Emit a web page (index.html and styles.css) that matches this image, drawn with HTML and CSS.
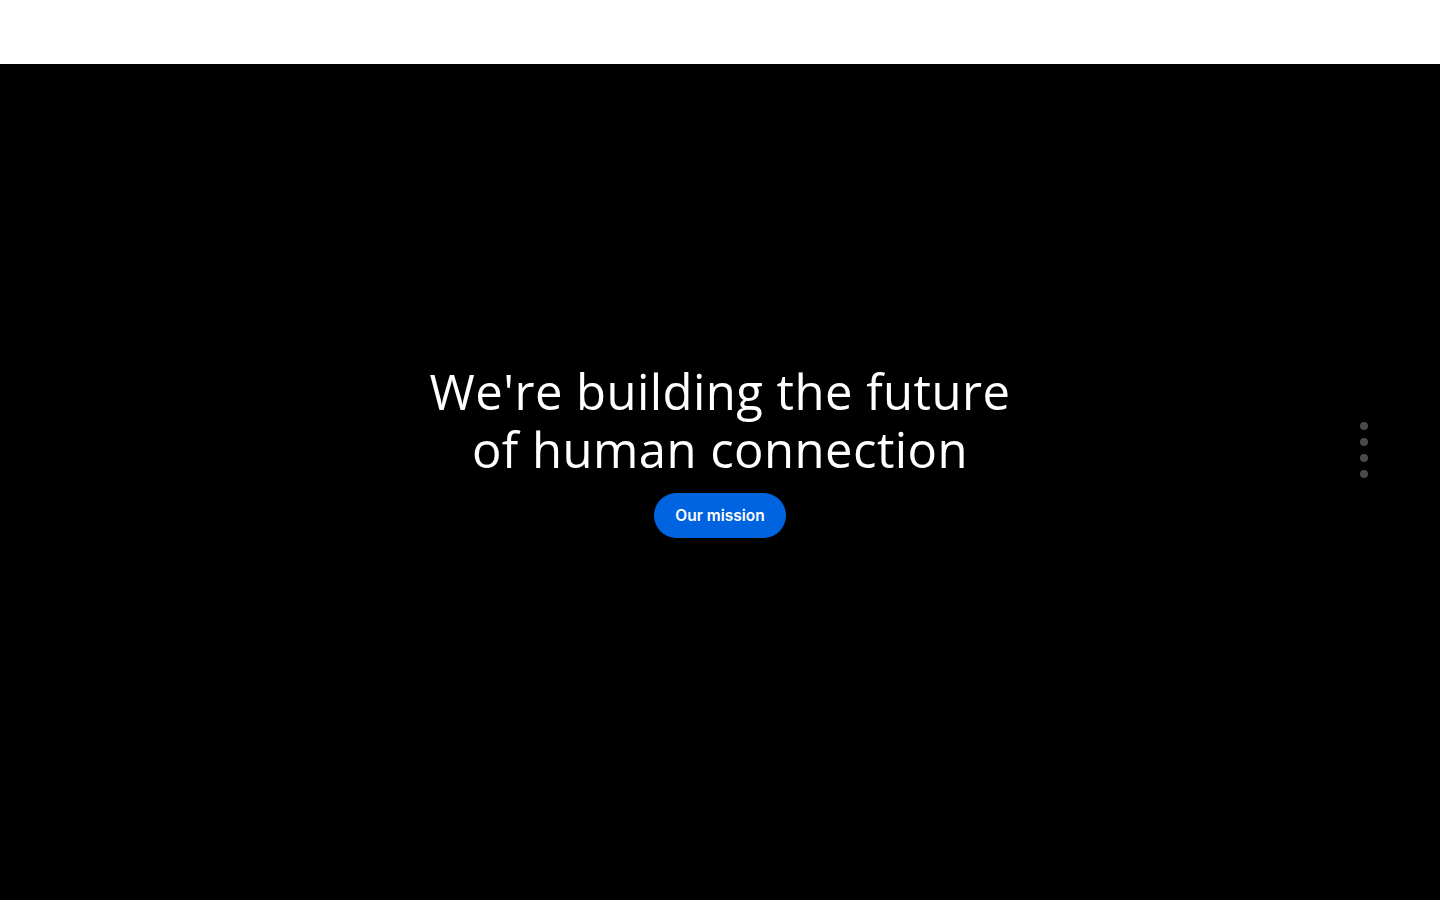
FILE: index.html
```html
<!DOCTYPE html>
<html lang="en">
<head>
<meta charset="utf-8">
<title>Meta</title>
<link rel="stylesheet" href="styles.css">
</head>
<body>
<header class="topbar"></header>
<main class="hero">
  <div class="hero-content">
    <h1 class="hero-title"><span class="line">We're building the future</span><span class="line">of human connection</span></h1>
    <a class="hero-button" href="#">Our mission</a>
  </div>
  <nav class="dots" aria-label="Slides">
    <span class="dot"></span>
    <span class="dot"></span>
    <span class="dot"></span>
    <span class="dot"></span>
  </nav>
</main>
</body>
</html>
```
FILE: styles.css
```css
html, body {
  margin: 0;
  padding: 0;
  height: 100%;
}
body {
  background: #000;
  font-family: "Open Sans", "Noto Sans", sans-serif;
  overflow: hidden;
}
.topbar {
  height: 64px;
  background: #fff;
}
.hero {
  position: relative;
  height: 836px;
  box-sizing: border-box;
  padding-bottom: 64px;
  background: #000;
  display: flex;
  align-items: center;
  justify-content: center;
}
.hero-content {
  display: flex;
  flex-direction: column;
  align-items: center;
}
.hero-title {
  margin: 0;
  color: #fff;
  font-family: "Open Sans", sans-serif;
  font-weight: 500;
  font-size: 49px;
  line-height: 58px;
  text-align: center;
  letter-spacing: 0.45px;
  display: flex;
  flex-direction: column;
  align-items: center;
}
.line {
  display: block;
  white-space: nowrap;
}
.hero-button {
  margin-top: 15px;
  display: inline-flex;
  align-items: center;
  justify-content: center;
  width: 132px;
  height: 45px;
  border-radius: 23px;
  background: #0064e0;
  color: #fff;
  font-family: "Inter", sans-serif;
  font-weight: 600;
  font-size: 15.5px;
  line-height: 1;
  text-decoration: none;
}
.dots {
  position: absolute;
  right: 72px;
  top: 50%;
  transform: translateY(calc(-50% - 32px));
  display: flex;
  flex-direction: column;
  gap: 8px;
}
.dot {
  width: 8px;
  height: 8px;
  border-radius: 50%;
  background: #4a4a4a;
}
```
